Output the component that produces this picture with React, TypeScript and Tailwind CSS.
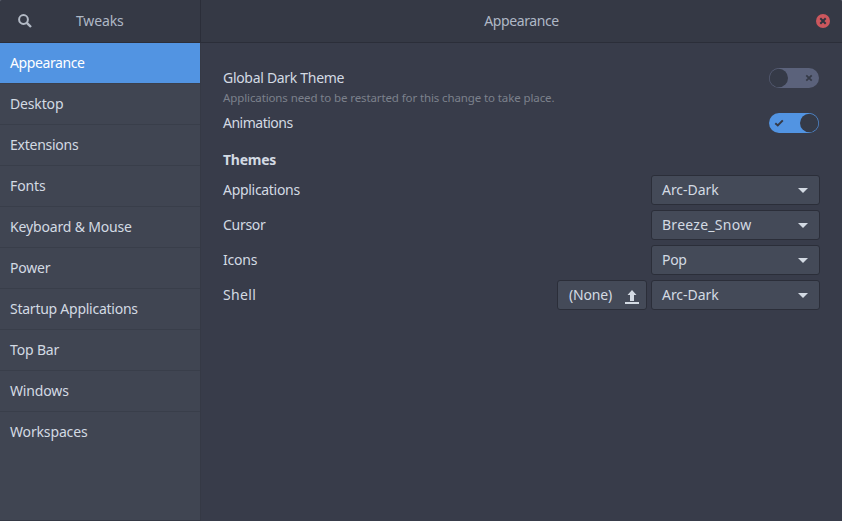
import type { ReactNode } from "react";

const sections: { label: string; spacing: string }[] = [
  { label: "Appearance", spacing: "tracking-[-0.4px]" },
  { label: "Desktop", spacing: "tracking-[-0.15px]" },
  { label: "Extensions", spacing: "tracking-[-0.25px]" },
  { label: "Fonts", spacing: "tracking-[-0.1px]" },
  { label: "Keyboard & Mouse", spacing: "tracking-[-0.16px]" },
  { label: "Power", spacing: "tracking-[-0.2px]" },
  { label: "Startup Applications", spacing: "tracking-[-0.25px]" },
  { label: "Top Bar", spacing: "tracking-[-0.15px]" },
  { label: "Windows", spacing: "tracking-[-0.15px]" },
  { label: "Workspaces", spacing: "tracking-[-0.15px]" },
];

function SearchIcon() {
  return (
    <svg width="16" height="16" viewBox="0 0 16 16" fill="none" stroke="#b3bac5">
      <circle cx="6.5" cy="6.5" r="4.4" strokeWidth="2" />
      <path d="M9.8 9.8 L14 14" strokeWidth="2.4" />
    </svg>
  );
}

function CloseButton() {
  return (
    <svg width="14" height="14" viewBox="0 0 14 14">
      <circle cx="7" cy="7" r="7" fill="#cc575d" />
      <path d="M4.3 4.3 L9.7 9.7 M9.7 4.3 L4.3 9.7" stroke="#2f343f" strokeWidth="2" />
    </svg>
  );
}

function Switch({ on }: { on: boolean }) {
  return (
    <svg width="50" height="20" viewBox="0 0 50 20" className="mr-px">
      <rect width="50" height="20" rx="10" fill={on ? "#5294e2" : "#5b627b"} />
      <circle cx={on ? 40.2 : 9.8} cy="10" r="9.2" fill="#353a47" />
      {on ? (
        <path d="M6.3 10.2 L8.8 12.4 L13.8 7.4" fill="none" stroke="#353a47" strokeWidth="2" />
      ) : (
        <path d="M37.3 7.3 L42.7 12.7 M42.7 7.3 L37.3 12.7" stroke="#353a47" strokeWidth="1.8" />
      )}
    </svg>
  );
}

function Select({ label, spacing }: { label: string; spacing: string }) {
  return (
    <button className="flex h-[30px] w-[169px] items-center justify-between rounded-[3px] border border-[#2b2e39] bg-[#444a58] pl-[10px] pr-[11px]">
      <span className={spacing}>{label}</span>
      <svg width="10" height="5" viewBox="0 0 10 5">
        <path d="M0 0 H10 L5 5 Z" fill="#d3dae3" />
      </svg>
    </button>
  );
}

function Row({ label, spacing, children }: { label: string; spacing: string; children: ReactNode }) {
  return (
    <div className="flex h-[30px] items-center justify-between">
      <span className={spacing}>{label}</span>
      <div className="flex gap-1">{children}</div>
    </div>
  );
}

export default function App() {
  return (
    <div className="h-[521px] w-[842px] bg-[#5a5e6a]">
      <div className="flex h-full w-full flex-col overflow-hidden rounded-t-[3px] bg-[#383c4a] font-['Noto_Sans',sans-serif] text-[14px] leading-5 text-[#d3dae3]">
        <header className="flex h-[43px] shrink-0 border-b border-[#2b2e39] bg-[#353945] text-[#afb8c5]">
          <div className="flex w-[201px] items-center border-r border-[#2b2e39] pl-[17px]">
            <SearchIcon />
            <span className="ml-[43px] tracking-[-0.15px]">Tweaks</span>
          </div>
          <div className="flex flex-1 items-center pr-3">
            <h1 className="flex-1 pl-[26px] text-center tracking-[-0.4px]">Appearance</h1>
            <CloseButton />
          </div>
        </header>
        <div className="flex min-h-0 flex-1">
          <nav className="w-[201px] shrink-0 border-b border-r border-[#353945] bg-[#404552]">
            {sections.map((section, index) => (
              <div
                key={section.label}
                className={
                  index === 0
                    ? "flex h-[41px] items-center border-b border-[#3b404c] bg-[#5294e2] pl-[10px] text-white"
                    : index === sections.length - 1
                      ? "flex h-10 items-center pl-[10px]"
                      : "flex h-[41px] items-center border-b border-[#393e4a] pl-[10px]"
                }
              >
                <span className={section.spacing}>{section.label}</span>
              </div>
            ))}
          </nav>
          <main className="flex-1 pl-[22px] pr-[22px] pt-[25px]">
            <div className="flex h-10 items-start justify-between">
              <div>
                <div className="tracking-[-0.3px]">Global Dark Theme</div>
                <div className="text-[11.5px] tracking-[-0.11px] text-[#7c818c]">
                  Applications need to be restarted for this change to take place.
                </div>
              </div>
              <Switch on={false} />
            </div>
            <div className="mt-[5px] flex h-5 items-center justify-between">
              <span className="tracking-[-0.5px]">Animations</span>
              <Switch on />
            </div>
            <h2 className="mt-[17px] font-bold tracking-[-0.25px]">Themes</h2>
            <div className="mt-[5px] flex flex-col gap-[5px]">
              <Row label="Applications" spacing="tracking-[-0.3px]">
                <Select label="Arc-Dark" spacing="tracking-[-0.05px]" />
              </Row>
              <Row label="Cursor" spacing="tracking-[-0.3px]">
                <Select label="Breeze_Snow" spacing="tracking-[0.27px]" />
              </Row>
              <Row label="Icons" spacing="tracking-[-0.2px]">
                <Select label="Pop" spacing="tracking-[-0.3px]" />
              </Row>
              <Row label="Shell" spacing="tracking-[0.35px]">
                <button className="flex h-[30px] w-[90px] items-center justify-between rounded-[3px] border border-[#2b2e39] bg-[#444a58] pl-[11px] pr-[7px]">
                  <span className="tracking-[-0.15px]">(None)</span>
                  <svg width="14" height="14" viewBox="0 0 14 14" className="mt-1">
                    <path d="M7 0 L11.5 5 H9 V11 H5 V5 H2.5 Z M0 12 H14 V14 H0 Z" fill="#d3dae3" />
                  </svg>
                </button>
                <Select label="Arc-Dark" spacing="tracking-[-0.05px]" />
              </Row>
            </div>
          </main>
        </div>
      </div>
    </div>
  );
}
